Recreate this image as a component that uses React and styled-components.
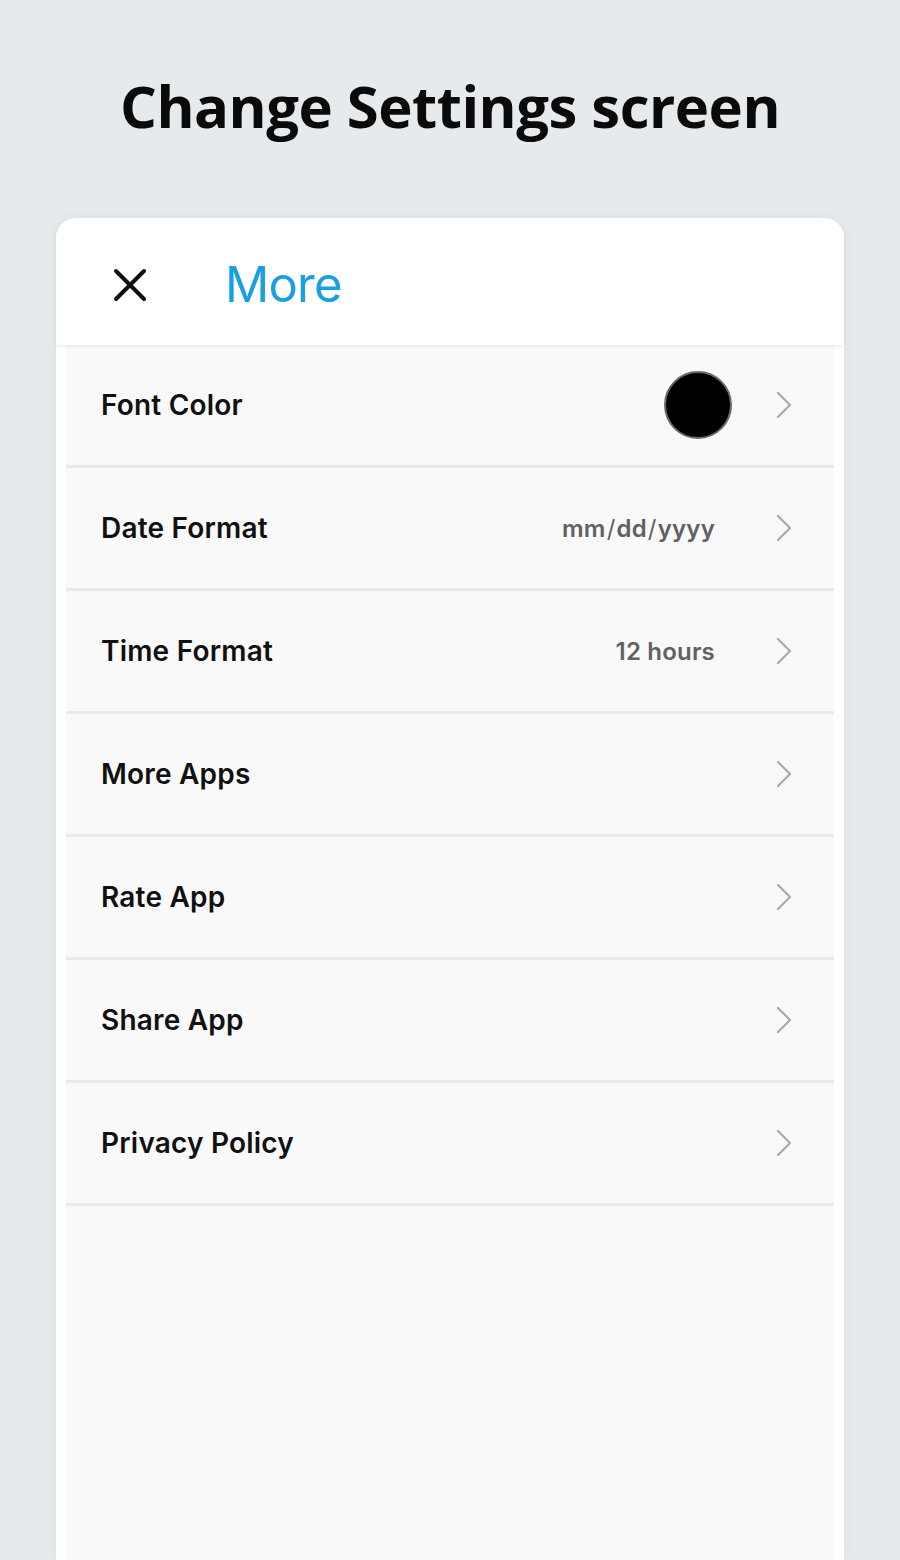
import React from "react";
import styled, { createGlobalStyle } from "styled-components";

const Global = createGlobalStyle`
  html, body { margin: 0; padding: 0; background: #e6eaed; }
  body { font-family: Inter, "Noto Sans", sans-serif; }
`;

const Page = styled.div`
  width: 900px;
  height: 1560px;
  overflow: hidden;
  background: #e6eaed;
  display: flex;
  flex-direction: column;
  align-items: center;
`;

const Heading = styled.h1`
  margin: 0;
  height: 218px;
  box-sizing: border-box;
  padding-top: 70px;
  font-family: "Open Sans", sans-serif;
  font-weight: 700;
  font-size: 58px;
  line-height: 72px;
  letter-spacing: -0.5px;
  color: #0a0a0a;
  text-align: center;
`;

const Card = styled.div`
  width: 788px;
  flex: 1;
  background: #ffffff;
  border-radius: 20px 20px 0 0;
  box-shadow: 0 0 12px rgba(0, 0, 0, 0.05);
  display: flex;
  flex-direction: column;
`;

const Header = styled.div`
  height: 127px;
  box-sizing: border-box;
  padding-top: 6px;
  display: flex;
  align-items: center;
  padding-left: 57px;
  gap: 78px;
  box-shadow: 0 2px 3px rgba(0, 0, 0, 0.06);
  position: relative;
  z-index: 1;
  border-radius: 20px 20px 0 0;
  background: #fff;
`;

const Title = styled.div`
  font-family: Inter, sans-serif;
  font-size: 49px;
  font-weight: 400;
  color: #1a9fe2;
  letter-spacing: -0.8px;
`;

const List = styled.div`
  flex: 1;
  margin: 0 10px;
  background: #f9f9f9;
`;

const Row = styled.div`
  height: 120px;
  display: flex;
  align-items: center;
  padding: 0 42px 0 35px;
  border-bottom: 3px solid #e9e9e9;
`;

const Label = styled.div`
  flex: 1;
  font-family: Inter, sans-serif;
  font-weight: 600;
  font-size: 28px;
  color: #111;
  letter-spacing: 0.2px;
`;

const Value = styled.div`
  font-family: Inter, sans-serif;
  font-weight: 600;
  font-size: 24px;
  color: #5f6164;
  letter-spacing: 0.2px;
  margin-right: 61px;
`;

const Slash = styled.span`
  margin: 0 1px;
  font-weight: 400;
`;

const Swatch = styled.div`
  width: 64px;
  height: 64px;
  border-radius: 50%;
  background: #000;
  border: 2px solid #6b6b6b;
  margin-right: 44px;
`;

const Chevron = () => (
  <svg width="16" height="28" viewBox="0 0 16 28" fill="none">
    <path d="M2 2 L14 14 L2 26" stroke="#a9a9a9" strokeWidth="2.2" strokeLinecap="round" strokeLinejoin="round" />
  </svg>
);

const Close = () => (
  <svg width="34" height="34" viewBox="0 0 34 34" fill="none">
    <path d="M3 3 L31 31 M31 3 L3 31" stroke="#111" strokeWidth="4" strokeLinecap="round" />
  </svg>
);

const rows = [
  { label: "Font Color", swatch: true },
  {
    label: "Date Format",
    value: (
      <>
        mm<Slash>/</Slash>dd<Slash>/</Slash>yyyy
      </>
    ),
  },
  { label: "Time Format", value: "12 hours" },
  { label: "More Apps" },
  { label: "Rate App" },
  { label: "Share App" },
  { label: "Privacy Policy" },
];

export default function App() {
  return (
    <>
      <Global />
      <Page>
        <Heading>Change Settings screen</Heading>
        <Card>
          <Header>
            <Close />
            <Title>More</Title>
          </Header>
          <List>
            {rows.map((r) => (
              <Row key={r.label}>
                <Label>{r.label}</Label>
                {r.swatch && <Swatch />}
                {r.value && <Value>{r.value}</Value>}
                <Chevron />
              </Row>
            ))}
          </List>
        </Card>
      </Page>
    </>
  );
}
